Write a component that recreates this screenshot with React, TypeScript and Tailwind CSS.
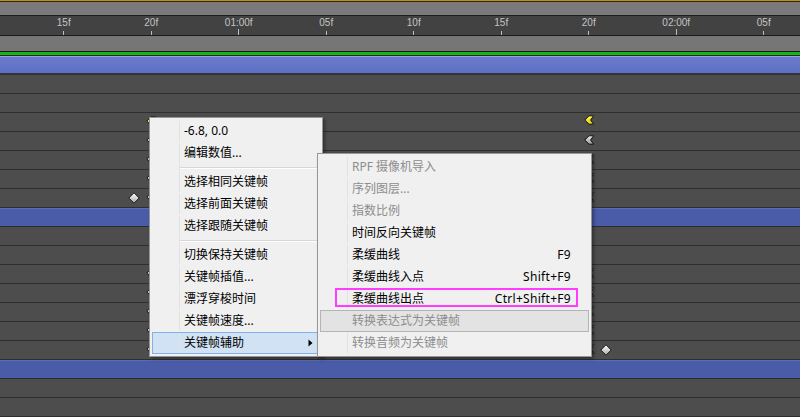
import React from "react"

const FONT = { fontFamily: '"Noto Sans", "Noto Sans CJK SC", sans-serif' }

const TICKS = [
  { label: "15f", major: false },
  { label: "20f", major: false },
  { label: "01:00f", major: true },
  { label: "05f", major: false },
  { label: "10f", major: false },
  { label: "15f", major: false },
  { label: "20f", major: false },
  { label: "02:00f", major: true },
  { label: "05f", major: false },
]

// keyframe with ease-in (left half diamond, concave right side)
function EaseKey({ x, top, yellow }: { x: number; top: number; yellow?: boolean }) {
  const id = yellow ? "gy" : "gg"
  return (
    <svg
      className="absolute"
      style={{ left: x, top }}
      width="11"
      height="10"
      viewBox="0 0 11 10"
    >
      <defs>
        <linearGradient id={id} x1="0" y1="0" x2="0" y2="1">
          <stop offset="0" stopColor={yellow ? "#fff35a" : "#e8e8e8"} />
          <stop offset="1" stopColor={yellow ? "#e6cf00" : "#9a9a9a"} />
        </linearGradient>
      </defs>
      <path d="M0.8 5 L5 0.8 H9.6 L6.6 5 L9.6 9.2 H5 Z" fill={`url(#${id})`} stroke="#111" strokeWidth="1" />
    </svg>
  )
}

function Diamond({ x, top }: { x: number; top: number }) {
  return (
    <svg className="absolute" style={{ left: x, top }} width="12" height="12" viewBox="0 0 12 12">
      <defs>
        <linearGradient id="dg" x1="0" y1="0" x2="0" y2="1">
          <stop offset="0" stopColor="#ffffff" />
          <stop offset="1" stopColor="#a8a8a8" />
        </linearGradient>
      </defs>
      <path d="M6 0.8 L11.2 6 L6 11.2 L0.8 6 Z" fill="url(#dg)" stroke="#1a1a1a" strokeWidth="1" />
    </svg>
  )
}

function Row({ children, blue }: { children?: React.ReactNode; blue?: boolean }) {
  return (
    <div
      className={
        blue
          ? "relative h-[19px] border-b border-[#2c2c2c] bg-[#4a5ba7] shadow-[inset_0_1px_0_#5c6db8]"
          : "relative h-[19px] border-b border-[#2f2f2f] bg-[#4d4d4d]"
      }
    >
      {children}
    </div>
  )
}

type Item = {
  label?: string
  shortcut?: string
  disabled?: boolean
  active?: boolean
  hover?: boolean
  arrow?: boolean
  sep?: boolean
}

function MenuItem({ item }: { item: Item }) {
  if (item.sep) {
    return (
      <div className="flex h-[7px]">
        <div className="w-[28px] shrink-0 border-r border-[#e2e2e2]" />
        <div className="flex flex-1 flex-col justify-center pr-[2px]">
          <div className="h-px bg-[#d7d7d7]" />
          <div className="h-px bg-white" />
        </div>
      </div>
    )
  }
  const box = item.active
    ? "border border-[#7fb3e8] bg-[#d0e2f3]"
    : item.hover
      ? "border border-[#b4b4b4] bg-[#e3e3e3]"
      : "border border-transparent"
  return (
    <div className={`flex h-[22px] items-center ${box}`}>
      <div className="h-full w-[27px] shrink-0 border-r border-[#e2e2e2]" />
      <span
        className={`pl-[4px] text-[12px] leading-none ${item.disabled ? "text-[#8d8d8d]" : "text-black"}`}
      >
        {item.label}
      </span>
      {item.shortcut && (
        <span className="ml-auto pr-[17px] text-[12px] leading-none tracking-[0.3px] text-black">{item.shortcut}</span>
      )}
      {item.arrow && (
        <svg className="ml-auto mr-[6px]" width="5" height="8" viewBox="0 0 5 8">
          <path d="M0.5 0.5 L4.5 4 L0.5 7.5 Z" fill="#000" />
        </svg>
      )}
    </div>
  )
}

const MAIN: Item[] = [
  { label: "-6.8, 0.0" },
  { label: "编辑数值..." },
  { sep: true },
  { label: "选择相同关键帧" },
  { label: "选择前面关键帧" },
  { label: "选择跟随关键帧" },
  { sep: true },
  { label: "切换保持关键帧" },
  { label: "关键帧插值..." },
  { label: "漂浮穿梭时间" },
  { label: "关键帧速度..." },
  { label: "关键帧辅助", active: true, arrow: true },
]

const SUB: Item[] = [
  { label: "RPF 摄像机导入", disabled: true },
  { label: "序列图层...", disabled: true },
  { label: "指数比例", disabled: true },
  { label: "时间反向关键帧" },
  { label: "柔缓曲线", shortcut: "F9" },
  { label: "柔缓曲线入点", shortcut: "Shift+F9" },
  { label: "柔缓曲线出点", shortcut: "Ctrl+Shift+F9" },
  { label: "转换表达式为关键帧", disabled: true, hover: true },
  { label: "转换音频为关键帧", disabled: true },
]

export default function App() {
  const keyRows = [0, 1, 2, 3, 4]
  return (
    <div className="relative h-[417px] w-[800px] overflow-hidden bg-[#4d4d4d]" style={FONT}>
      {/* top bars */}
      <div className="h-px bg-[#c98b07]" />
      <div className="h-px bg-[#262626]" />
      <div className="h-[13px] bg-[#7a7a7a]" />
      <div className="h-px bg-[#1e1e1e]" />

      {/* time ruler */}
      <div
        className="flex h-[19px] bg-[#424242] pl-[20px]"
        style={{ fontFamily: '"Liberation Sans", Arial, sans-serif' }}
      >
        {TICKS.map((t, i) => (
          <div key={i} className="flex w-[87.5px] shrink-0 flex-col items-center justify-between pt-[1px]">
            <span className="text-[10px] leading-[12px] text-[#c4c4c4]">{t.label}</span>
            <div className={`w-px bg-[#bdbdbd] ${t.major ? "h-[8px]" : "h-[4px]"}`} />
          </div>
        ))}
      </div>

      <div className="h-px bg-[#1a1a1a]" />
      <div className="h-[15px] bg-[#767676]" />
      <div className="h-px bg-[#1a1a1a]" />
      <div className="h-[3px] bg-[#17b417]" />
      <div className="h-px bg-[#2a2a2a]" />
      <div className="h-[17px] border-t border-[#96a2e2] bg-[linear-gradient(#6a7acd,#5f6fc3)]" />
      <div className="h-[2px] bg-[#343434]" />

      {/* layer rows */}
      <Row />
      <Row />
      {keyRows.map((i) => (
        <Row key={"a" + i}>
          <EaseKey x={146} top={3} yellow={i === 0} />
          <EaseKey x={584} top={i === 0 ? 2 : 3} yellow={i === 0} />
          {i === 4 && <Diamond x={128} top={3} />}
        </Row>
      ))}
      <Row blue />
      <Row />
      <Row />
      {keyRows.map((i) => (
        <Row key={"b" + i}>
          <EaseKey x={146} top={3} />
          <EaseKey x={584} top={3} />
          {i === 4 && <Diamond x={600} top={3} />}
        </Row>
      ))}
      <Row blue />
      <Row />
      <Row />

      {/* context menu */}
      <div className="absolute left-[149px] top-[117px] w-[174px] border border-[#979797] bg-[#f0f0f0] p-[2px] shadow-[2px_2px_3px_rgba(0,0,0,0.35)]">
        {MAIN.map((it, i) => (
          <MenuItem key={i} item={it} />
        ))}
      </div>

      {/* submenu */}
      <div className="absolute left-[317px] top-[153px] w-[275px] border border-[#979797] bg-[#f0f0f0] p-[2px] shadow-[2px_2px_3px_rgba(0,0,0,0.35)]">
        {SUB.map((it, i) => (
          <MenuItem key={i} item={it} />
        ))}
      </div>

      {/* highlight annotation */}
      <div className="absolute left-[335px] top-[288px] h-[19px] w-[243px] border-2 border-[#ff3cff]" />
    </div>
  )
}
